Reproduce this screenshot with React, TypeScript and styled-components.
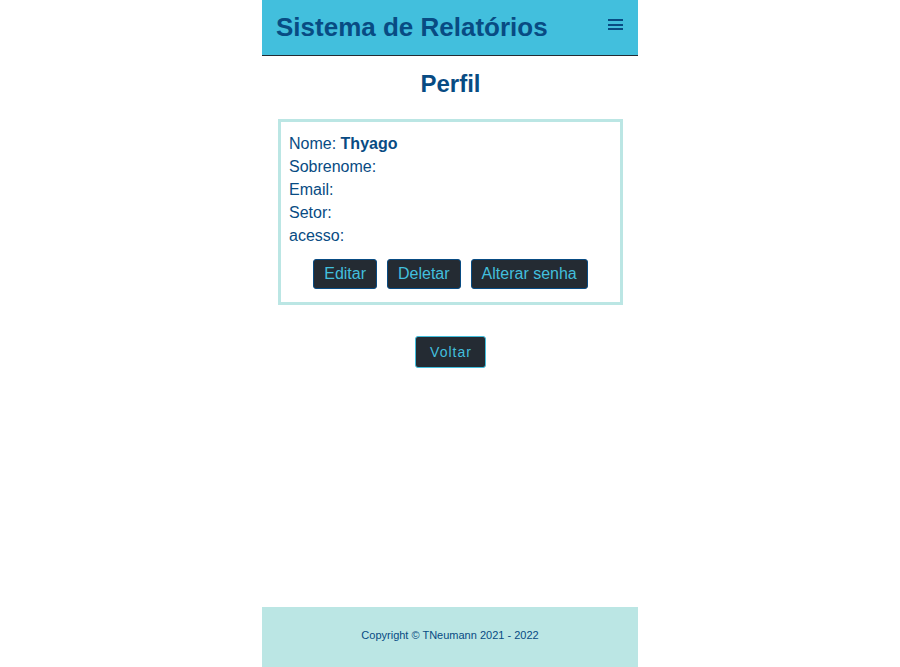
import React from "react";
import styled, { createGlobalStyle } from "styled-components";

const navy = "#084b83";
const sky = "#42bfdd";
const mint = "#bbe6e4";
const dark = "#242b33";

const GlobalStyle = createGlobalStyle`
  * { box-sizing: border-box; }
  body { margin: 0; background: #ffffff; color: ${navy}; font-family: "Liberation Sans", Arial, sans-serif; font-size: 16px; }
`;
const Page = styled.div`
  display: flex;
  flex-direction: column;
  width: 100%;
  max-width: 376px;
  min-height: 100vh;
  margin: 0 auto;
`;
const Header = styled.header`
  display: flex;
  justify-content: space-between;
  align-items: flex-start;
  padding: 12px 15px 12px 14px;
  background: ${sky};
  border-bottom: 1px solid ${dark};
`;
const Brand = styled.h1`
  margin: 0;
  font-size: 26px;
  line-height: 31px;
`;
const MenuButton = styled.button`
  display: flex;
  margin: 0;
  padding: 6px 0;
  border: 0;
  background: none;
  color: ${navy};
  cursor: pointer;
`;
const Main = styled.main`
  flex: 1;
  display: flex;
  flex-direction: column;
  align-items: center;
  padding: 14px 15px 0 16px;
`;
const Title = styled.h2`
  margin: 0 0 21px;
  font-size: 24px;
  line-height: 28px;
`;
const Card = styled.section`
  width: 100%;
  padding: 10px 8px 13px;
  border: 3px solid ${mint};
`;
const Field = styled.p`
  margin: 0;
  line-height: 23px;
`;
const Actions = styled.div`
  display: flex;
  justify-content: center;
  gap: 10px;
  margin-top: 12px;
`;
const ActionButton = styled.button`
  height: 30px;
  padding: 0 10px;
  border: 1px solid ${navy};
  border-radius: 3px;
  background: ${dark};
  color: ${sky};
  font: inherit;
  cursor: pointer;
`;
const BackButton = styled(ActionButton)`
  height: 32px;
  margin-top: 31px;
  padding: 0 13px 0 14px;
  border-color: ${sky};
  font-size: 14px;
  letter-spacing: 1px;
`;
const Footer = styled.footer`
  padding: 18px 20px 22px;
  background: ${mint};
  font-size: 11px;
  line-height: 20px;
  text-align: center;
`;

const fields = [
  { label: "Nome:", value: "Thyago" },
  { label: "Sobrenome:" },
  { label: "Email:" },
  { label: "Setor:" },
  { label: "acesso:" },
];

export default function App() {
  return (
    <Page>
      <GlobalStyle />
      <Header>
        <Brand>Sistema de Relatórios</Brand>
        <MenuButton type="button" aria-label="Menu">
          <svg width="15" height="13" viewBox="0 0 15 13" fill="currentColor" aria-hidden="true">
            <path d="M0 1h15v2H0zM0 6h15v2H0zM0 10h15v2H0z" />
          </svg>
        </MenuButton>
      </Header>
      <Main>
        <Title>Perfil</Title>
        <Card>
          {fields.map(({ label, value }) => (
            <Field key={label}>
              {label} {value && <strong>{value}</strong>}
            </Field>
          ))}
          <Actions>
            <ActionButton type="button">Editar</ActionButton>
            <ActionButton type="button">Deletar</ActionButton>
            <ActionButton type="button">Alterar senha</ActionButton>
          </Actions>
        </Card>
        <BackButton type="button">Voltar</BackButton>
      </Main>
      <Footer>Copyright © TNeumann 2021 - 2022</Footer>
    </Page>
  );
}
